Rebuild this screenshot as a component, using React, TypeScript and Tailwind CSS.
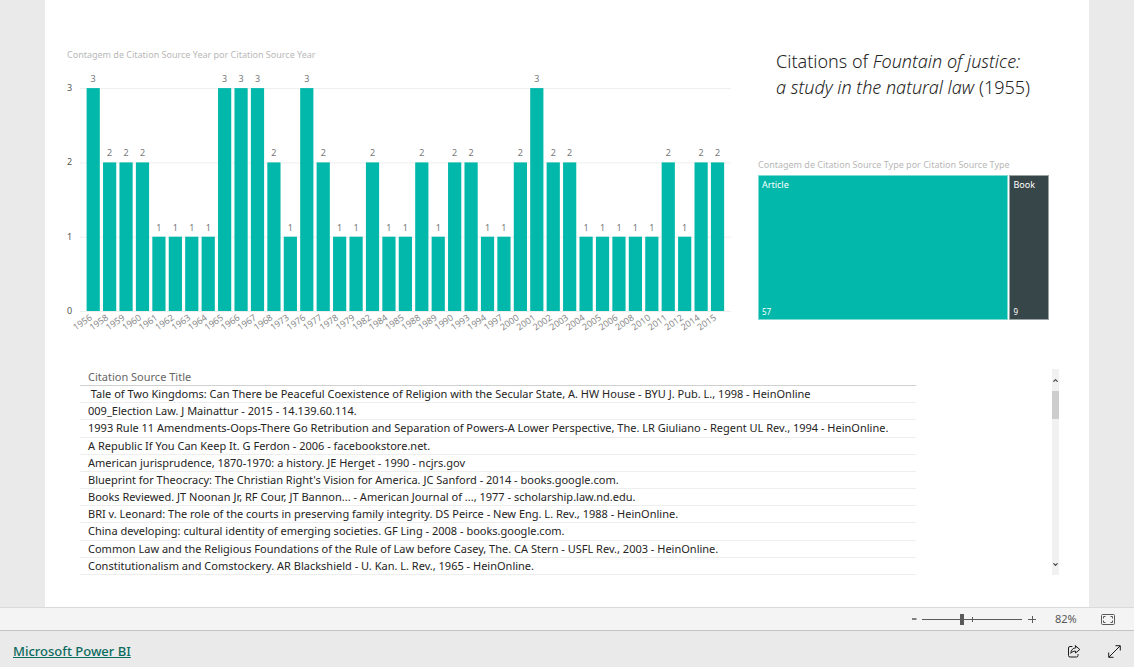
import { ChevronDown, ChevronUp } from "lucide-react";

const YEARS: [string, number][] = [
  ["1956", 3], ["1958", 2], ["1959", 2], ["1960", 2], ["1961", 1], ["1962", 1],
  ["1963", 1], ["1964", 1], ["1965", 3], ["1966", 3], ["1967", 3], ["1968", 2],
  ["1973", 1], ["1976", 3], ["1977", 2], ["1978", 1], ["1979", 1], ["1982", 2],
  ["1984", 1], ["1985", 1], ["1988", 2], ["1989", 1], ["1990", 2], ["1993", 2],
  ["1994", 1], ["1997", 1], ["2000", 2], ["2001", 3], ["2002", 2], ["2003", 2],
  ["2004", 1], ["2005", 1], ["2006", 1], ["2008", 1], ["2010", 1], ["2011", 2],
  ["2012", 1], ["2014", 2], ["2015", 2],
];

const CITATIONS = [
  "\u00a0Tale of Two Kingdoms: Can There be Peaceful Coexistence of Religion with the Secular State, A. HW House - BYU J. Pub. L., 1998 - HeinOnline",
  "009_Election Law. J Mainattur - 2015 - 14.139.60.114.",
  "1993 Rule 11 Amendments-Oops-There Go Retribution and Separation of Powers-A Lower Perspective, The. LR Giuliano - Regent UL Rev., 1994 - HeinOnline.",
  "A Republic If You Can Keep It. G Ferdon - 2006 - facebookstore.net.",
  "American jurisprudence, 1870-1970: a history. JE Herget - 1990 - ncjrs.gov",
  "Blueprint for Theocracy: The Christian Right's Vision for America. JC Sanford - 2014 - books.google.com.",
  "Books Reviewed. JT Noonan Jr, RF Cour, JT Bannon... - American Journal of ..., 1977 - scholarship.law.nd.edu.",
  "BRI v. Leonard: The role of the courts in preserving family integrity. DS Peirce - New Eng. L. Rev., 1988 - HeinOnline.",
  "China developing: cultural identity of emerging societies. GF Ling - 2008 - books.google.com.",
  "Common Law and the Religious Foundations of the Rule of Law before Casey, The. CA Stern - USFL Rev., 2003 - HeinOnline.",
  "Constitutionalism and Comstockery. AR Blackshield - U. Kan. L. Rev., 1965 - HeinOnline.",
];

const BASE = 249;
const UNIT = 74.3;
const STEP = 16.43;

function YearChart() {
  return (
    <section>
      <h2 className="text-[9px] leading-[14px] text-[#b8b8b8]">
        Contagem de Citation Source Year por Citation Source Year
      </h2>
      <svg viewBox="0 0 668 272" className="block w-full">
        {[0, 1, 2, 3].map((n) => (
          <g key={n}>
            <line x1="13" x2="664" y1={BASE - n * UNIT + 0.5} y2={BASE - n * UNIT + 0.5} stroke="#eeeeee" />
            <text x="0" y={BASE - n * UNIT + 3} fontSize="9" fill="#555555">
              {n}
            </text>
          </g>
        ))}
        {YEARS.map(([year, count], i) => {
          const x = 19.6 + i * STEP;
          const top = BASE - count * UNIT;
          return (
            <g key={year}>
              <rect x={x} y={top} width="13.2" height={count * UNIT} fill="#01b8aa" />
              <text x={x + 6.6} y={top - 6} fontSize="9" fill="#777777" textAnchor="middle">
                {count}
              </text>
              <text
                x={x + 6}
                y={BASE + 8}
                fontSize="9"
                fill="#888888"
                textAnchor="end"
                transform={`rotate(-35 ${x + 6} ${BASE + 8})`}
              >
                {year}
              </text>
            </g>
          );
        })}
      </svg>
    </section>
  );
}

function TypeTreemap() {
  return (
    <section>
      <h2 className="text-[9px] leading-[14px] text-[#b8b8b8]">
        Contagem de Citation Source Type por Citation Source Type
      </h2>
      <div className="mt-[3px] grid h-[145px] grid-cols-[57fr_9fr] gap-px text-[9px] leading-3 text-white">
        <div className="flex flex-col justify-between border border-[#7fdad3] bg-[#01b8aa] px-[3px] py-[3px]">
          <span>Article</span>
          <span className="text-[8px] leading-[8px]">57</span>
        </div>
        <div className="flex flex-col justify-between border border-[#9aa2a4] bg-[#374649] px-[3px] py-[3px]">
          <span>Book</span>
          <span className="text-[8px] leading-[8px]">9</span>
        </div>
      </div>
    </section>
  );
}

function CitationTable() {
  return (
    <section className="flex justify-between">
      <table className="h-[206px] w-[836px] border-collapse text-left text-[11px] leading-4 text-[#252423]">
        <thead>
          <tr className="border-b border-[#d0d0d0]">
            <th className="px-2 py-0 font-normal text-[#666666]">Citation Source Title</th>
          </tr>
        </thead>
        <tbody>
          {CITATIONS.map((title) => (
            <tr key={title} className="border-b border-[#eeeeee]">
              <td className="whitespace-nowrap px-2 py-0">{title}</td>
            </tr>
          ))}
        </tbody>
      </table>
      <div className="flex w-[7px] flex-col bg-[#f1f1f1] text-[#444444]">
        <button aria-label="Scroll up" className="flex h-[22px] items-center justify-center">
          <ChevronUp className="size-[7px] shrink-0" strokeWidth={4} />
        </button>
        <div className="h-7 bg-[#cdcdcd]" />
        <button aria-label="Scroll down" className="mt-auto flex h-[22px] items-center justify-center">
          <ChevronDown className="size-[7px] shrink-0" strokeWidth={4} />
        </button>
      </div>
    </section>
  );
}

function ZoomBar() {
  return (
    <div className="flex h-[23px] items-center justify-end border-t border-[#dadada] bg-[#f4f4f4] pr-[19px] text-[#5a5a5a]">
      <button aria-label="Zoom out" className="flex size-4 items-center justify-center">
        <svg viewBox="0 0 8 8" className="size-2" stroke="currentColor" strokeWidth="1.5">
          <path d="M2 4h4.500" />
        </svg>
      </button>
      <div className="relative flex h-4 w-[100px] items-center">
        <input
          type="range"
          aria-label="Zoom level"
          min={0}
          max={100}
          defaultValue={40}
          className="h-4 w-full appearance-none bg-transparent [&::-webkit-slider-runnable-track]:h-px [&::-webkit-slider-runnable-track]:bg-[#5a5a5a] [&::-webkit-slider-thumb]:-mt-[5px] [&::-webkit-slider-thumb]:h-[11px] [&::-webkit-slider-thumb]:w-1 [&::-webkit-slider-thumb]:appearance-none [&::-webkit-slider-thumb]:bg-[#5a5a5a]"
        />
        <span className="absolute left-1/2 top-[6px] h-[5px] w-px bg-[#5a5a5a]" />
      </div>
      <button aria-label="Zoom in" className="ml-[2px] flex size-4 items-center justify-center">
        <svg viewBox="0 0 8 8" className="size-2" stroke="currentColor">
          <path d="M0 4.500h8M4.500 1v7" />
        </svg>
      </button>
      <span className="ml-[15px] w-9 text-[11px] leading-4">82%</span>
      <button aria-label="Fit to page" className="ml-[10px]">
        <svg viewBox="0 0 14 11" className="h-[11px] w-[14px]" fill="none" stroke="currentColor">
          <rect x="0.5" y="0.5" width="13" height="10" rx="1" />
          <path d="M2.500 4.500v-2h2M9.500 2.500h2v2M11.500 6.500v2h-2M4.500 8.500h-2v-2" />
        </svg>
      </button>
    </div>
  );
}

function Footer() {
  return (
    <footer className="flex h-[37px] items-center justify-between border-t border-[#c4c4c4] bg-[#eaeaea] px-[13px] pt-1">
      <a href="#" className="text-[13px] font-medium leading-5 text-[#0b6a5e] underline">
        Microsoft Power BI
      </a>
      <div className="flex items-center gap-[27px] text-[#1a1a1a]">
        <button aria-label="Share">
          <svg viewBox="0 0 14 13" className="h-[13px] w-[14px]" fill="none" stroke="currentColor" strokeLinejoin="round" strokeLinecap="round">
            <path d="M5 1.500H3A1.500 1.500 0 0 0 1.500 3v7.500A1.500 1.500 0 0 0 3 12h6.500a1.500 1.500 0 0 0 1.500-1.500V9.500" />
            <path d="M8.500 0.800 12.800 4.500 8.500 8V6.200C6.500 6 5 6.800 3.800 8.300 4 5.200 5.800 3 8.500 2.800Z" />
          </svg>
        </button>
        <button aria-label="Full screen">
          <svg viewBox="0 0 13 13" className="size-[13px]" fill="none" stroke="currentColor">
            <path d="M1 12 12 1M7.500 0.700h4.800v4.800M0.700 7.500v4.800h4.800" />
          </svg>
        </button>
      </div>
    </footer>
  );
}

export default function App() {
  return (
    <div className="flex min-h-screen flex-col bg-[#eaeaea] font-['Noto_Sans',sans-serif]">
      <main className="mx-[45px] flex-1 bg-white pb-6 pl-[22px] pr-[30px] pt-12">
        <div className="grid grid-cols-[668fr_291fr] gap-[23px] pr-[10px]">
          <YearChart />
          <div>
            <h1 className="mb-[58px] whitespace-nowrap pl-[18px] text-[18px] font-light leading-[26px] text-[#252423]">
              Citations of <em>Fountain of justice:</em>
              <br />
              <em>a study in the natural law</em> (1955)
            </h1>
            <TypeTreemap />
          </div>
        </div>
        <div className="mt-[35px] pl-[13px]">
          <CitationTable />
        </div>
      </main>
      <ZoomBar />
      <Footer />
    </div>
  );
}
